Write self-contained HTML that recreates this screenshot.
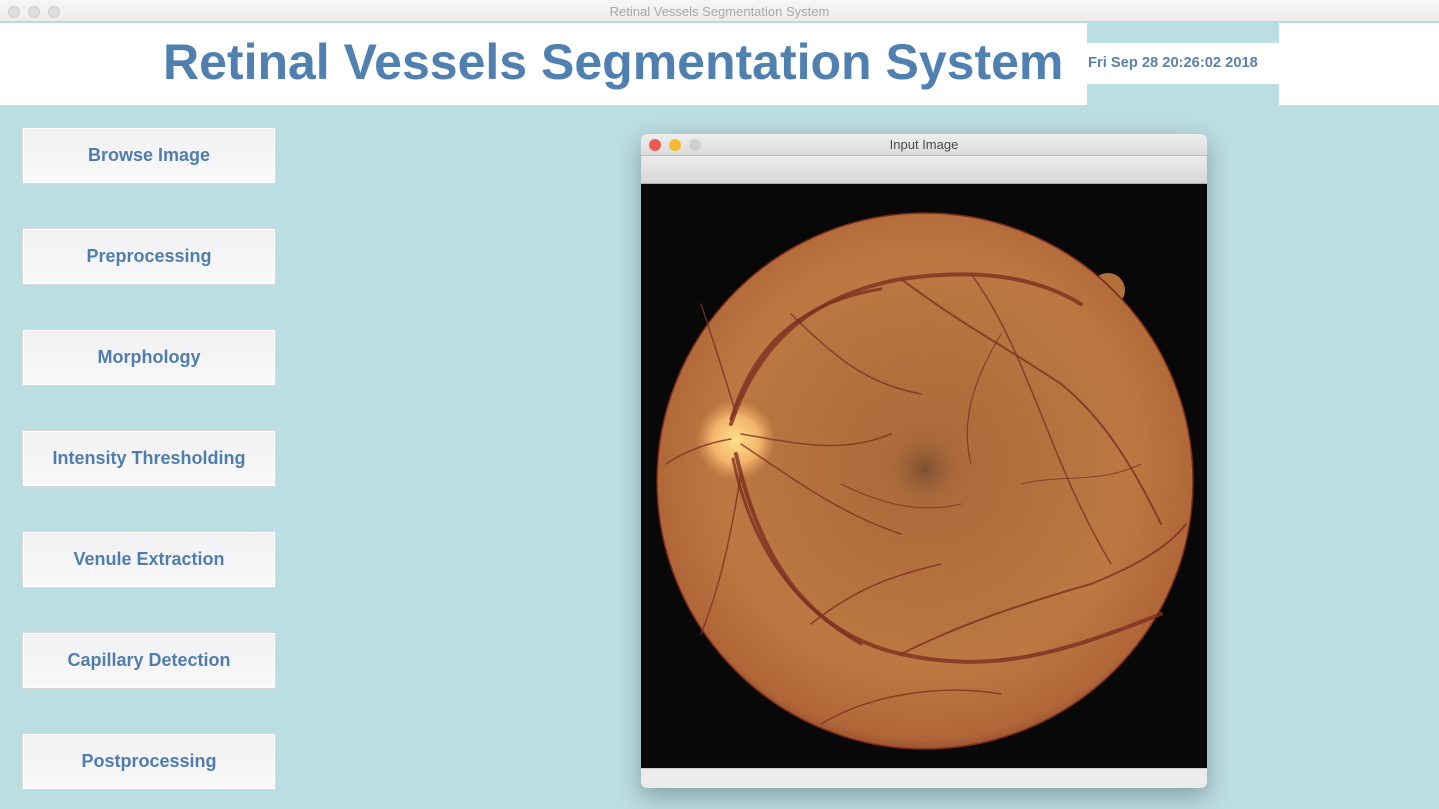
<!DOCTYPE html>
<html><head><style>
*{margin:0;padding:0;box-sizing:border-box}
body{width:1439px;height:809px;overflow:hidden;background:#bbdee3;font-family:"Liberation Sans",sans-serif;position:relative}
.tb{position:absolute;left:0;top:0;width:1439px;height:22px;background:linear-gradient(#f6f6f6,#ececec);border-bottom:1px solid #cfcfcf;text-align:center;font-size:13px;color:#a8a8a8;line-height:24px}
.tb i{position:absolute;top:6px;width:12px;height:12px;border-radius:50%;background:#dcdcdc;border:1px solid #cfcfcf}
.hdr{position:absolute;left:0;top:23px;width:1439px;height:82px;background:#fff}
.title{position:absolute;left:163px;top:33px;font-size:50px;font-weight:bold;color:#4f80b0;white-space:nowrap}
.dbox{position:absolute;left:1087px;top:23px;width:192px;height:82px;background:#bbdee3}
.dband{position:absolute;left:1087px;top:43px;width:192px;height:41px;background:#fff;font-size:14.7px;font-weight:bold;color:#5a82ad;line-height:40px;padding-left:1px}
.btn{position:absolute;left:22px;width:254px;height:57px;background:linear-gradient(#f1f1f3,#f9f9fa);border:1px solid #d8d8d8;box-shadow:inset 0 0 0 1px #fff;text-align:center;line-height:55px;font-size:18px;font-weight:bold;color:#4f7eae}
.win{position:absolute;left:641px;top:134px;width:566px;height:654px;border-radius:5px;overflow:hidden;box-shadow:0 8px 25px rgba(0,0,0,.3);background:#0a0a0a}
.wt{height:22px;background:linear-gradient(#eeeeee,#dcdcdc);border-bottom:1px solid #bdbdbd;text-align:center;font-size:13px;line-height:22px;color:#4a4a4a;position:relative}
.wt i{position:absolute;top:5px;width:12px;height:12px;border-radius:50%}
.tool{height:28px;background:linear-gradient(#ececec,#d6d6d6);border-bottom:1px solid #b0b0b0}
.foot{position:absolute;left:0;bottom:0;width:566px;height:20px;background:#ececec;border-top:1px solid #cfcfcf}
</style></head><body>
<div class="tb">Retinal Vessels Segmentation System<i style="left:8px"></i><i style="left:28px"></i><i style="left:48px"></i></div>
<div class="hdr"></div>
<div class="title">Retinal Vessels Segmentation System</div>
<div class="dbox"></div>
<div class="dband">Fri Sep 28 20:26:02 2018</div>
<div class="btn" style="top:127px">Browse Image</div>
<div class="btn" style="top:228px">Preprocessing</div>
<div class="btn" style="top:329px">Morphology</div>
<div class="btn" style="top:430px">Intensity Thresholding</div>
<div class="btn" style="top:531px">Venule Extraction</div>
<div class="btn" style="top:632px">Capillary Detection</div>
<div class="btn" style="top:733px">Postprocessing</div>
<div class="win">
<div class="wt">Input Image<i style="left:8px;background:#ee5a52"></i><i style="left:28px;background:#f5bc30"></i><i style="left:48px;background:#cfcfcf"></i></div>
<div class="tool"></div>
<svg width="566" height="584" style="position:absolute;left:0;top:50px">
<defs>
<radialGradient id="f" cx="0.5" cy="0.47" r="0.55">
<stop offset="0" stop-color="#a8683a"/><stop offset="0.7" stop-color="#bd7842"/><stop offset="0.93" stop-color="#b06638"/><stop offset="1" stop-color="#8a4228"/>
</radialGradient>
<radialGradient id="d" cx="0.5" cy="0.5" r="0.5">
<stop offset="0" stop-color="#ffe08a"/><stop offset="0.6" stop-color="#f2b46a"/><stop offset="1" stop-color="#e69a5e" stop-opacity="0"/>
</radialGradient>
<radialGradient id="m" cx="0.5" cy="0.5" r="0.5">
<stop offset="0" stop-color="#7e5030"/><stop offset="1" stop-color="#a8683a" stop-opacity="0"/>
</radialGradient>
</defs>
<rect width="566" height="584" fill="#080808"/>
<circle cx="467" cy="106" r="17" fill="#b07038"/>
<circle cx="284" cy="297" r="268" fill="url(#f)" stroke="#7a2a1a" stroke-width="1.5"/>
<circle cx="284" cy="285" r="40" fill="url(#m)"/>
<circle cx="95" cy="256" r="40" fill="url(#d)"/>
<g fill="none" stroke="#7d3022" stroke-opacity="0.8" stroke-linecap="round">
<path d="M90 240 C120 150 180 110 260 95 C330 85 390 90 440 120" stroke-width="4"/>
<path d="M90 235 C110 170 150 120 240 105" stroke-width="3"/>
<path d="M95 270 C120 380 170 450 260 470 C350 490 420 470 520 430" stroke-width="4"/>
<path d="M92 275 C110 360 150 420 220 460" stroke-width="3"/>
<path d="M260 95 C320 140 360 160 420 200 C470 240 500 300 520 340" stroke-width="2"/>
<path d="M260 470 C320 440 380 420 450 400 C500 380 530 360 545 340" stroke-width="2"/>
<path d="M100 250 C160 260 200 270 250 250" stroke-width="1.5"/>
<path d="M100 260 C160 300 200 330 260 350" stroke-width="1.5"/>
<path d="M150 130 C200 180 230 200 280 210" stroke-width="1.5"/>
<path d="M170 440 C220 400 260 390 300 380" stroke-width="1.5"/>
<path d="M330 90 C360 130 380 180 400 230 C420 280 440 330 470 380" stroke-width="1.5"/>
<path d="M360 150 C330 200 320 240 330 280" stroke-width="1.2"/>
<path d="M90 255 C60 260 40 270 25 280" stroke-width="1.5"/>
<path d="M95 230 C80 180 70 150 60 120" stroke-width="1.5"/>
<path d="M100 290 C90 350 80 400 60 450" stroke-width="1.5"/>
<path d="M180 540 C230 510 300 500 360 510" stroke-width="1.5"/>
<path d="M200 300 C240 320 280 330 320 320" stroke-width="1"/>
<path d="M380 300 C420 290 460 300 500 280" stroke-width="1"/>
</g>
</svg>
<div class="foot"></div>
</div>
</body></html>
